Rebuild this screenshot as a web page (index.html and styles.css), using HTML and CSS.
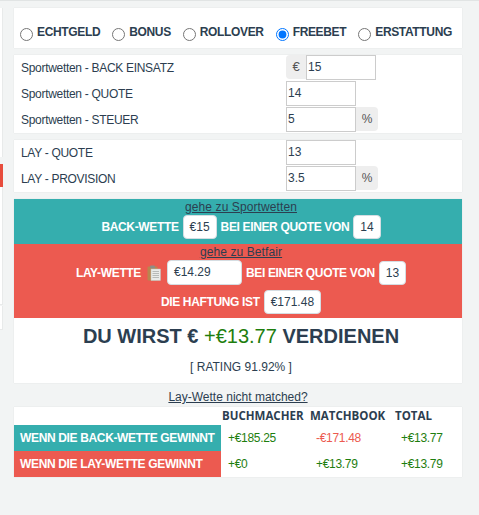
FILE: index.html
```html
<!DOCTYPE html>
<html lang="de">
<head>
  <meta charset="UTF-8" />
  <meta name="viewport" content="width=device-width, initial-scale=1.0" />
  <title>Rechner</title>
  <link rel="stylesheet" href="styles.css">
</head>
<body>

  <!-- sidebar edge -->
  <div class="side-edge"></div>
  <div class="side-mark"></div>
  <div class="side-low"></div>
  <div class="side-foot"></div>

  <main class="page">
    <section class="card modes">
      <label class="mode"><input type="radio" name="mode" /><span>ECHTGELD</span></label>
      <label class="mode"><input type="radio" name="mode" /><span>BONUS</span></label>
      <label class="mode"><input type="radio" name="mode" /><span>ROLLOVER</span></label>
      <label class="mode"><input type="radio" name="mode" checked /><span>FREEBET</span></label>
      <label class="mode"><input type="radio" name="mode" /><span>ERSTATTUNG</span></label>
    </section>

    <section class="card fields">
      <div class="row">
        <span class="row-label">Sportwetten - BACK EINSATZ</span>
        <span class="addon addon-left">€</span><input class="num" value="15" />
      </div>
      <div class="row">
        <span class="row-label">Sportwetten - QUOTE</span>
        <input class="num" value="14" />
      </div>
      <div class="row">
        <span class="row-label">Sportwetten - STEUER</span>
        <input class="num" value="5" /><span class="addon addon-right">%</span>
      </div>
    </section>

    <section class="card fields">
      <div class="row">
        <span class="row-label">LAY - QUOTE</span>
        <input class="num" value="13" />
      </div>
      <div class="row">
        <span class="row-label">LAY - PROVISION</span>
        <input class="num" value="3.5" /><span class="addon addon-right">%</span>
      </div>
    </section>

    <section class="card result">
      <div class="band band-back">
        <a class="go" href="#">gehe zu Sportwetten</a>
        <div class="band-line">
          <b>BACK-WETTE</b><span class="chip">€15</span><b>BEI EINER QUOTE VON</b><span class="chip">14</span>
        </div>
      </div>
      <div class="band band-lay">
        <a class="go" href="#">gehe zu Betfair</a>
        <div class="band-line">
          <b>LAY-WETTE</b>
          <svg class="clip" width="14" height="16" viewBox="0 0 14 16">
            <rect x="0.5" y="1.5" width="10" height="14" rx="1" fill="#b8864f" />
            <rect x="3" y="0.5" width="5" height="3" rx="1" fill="#8d8d86" />
            <rect x="4" y="4" width="9.5" height="11.5" fill="#e9ebe9" stroke="#bfc3c0" stroke-width="0.5" />
            <path d="M5.5 6.5h6.5M5.5 8.5h6.5M5.5 10.5h6.5M5.5 12.5h6.5" stroke="#a9adab" stroke-width="0.8" />
          </svg>
          <span class="chip chip-wide">€14.29</span><b>BEI EINER QUOTE VON</b><span class="chip">13</span>
        </div>
        <div class="band-line band-line-last">
          <b>DIE HAFTUNG IST</b><span class="chip">€171.48</span>
        </div>
      </div>
      <h2 class="profit">DU WIRST € <span class="plus">+€13.77</span> VERDIENEN</h2>
      <p class="rating">[ RATING 91.92% ]</p>
    </section>

    <p class="unmatched"><a href="#">Lay-Wette nicht matched?</a></p>

    <section class="card">
      <table class="summary">
        <thead>
          <tr>
            <th class="col-name"></th>
            <th class="col-book">BUCHMACHER</th>
            <th class="col-match">MATCHBOOK</th>
            <th class="col-total">TOTAL</th>
          </tr>
        </thead>
        <tbody>
          <tr>
            <td class="name name-back">WENN DIE BACK-WETTE GEWINNT</td>
            <td class="plus">+€185.25</td>
            <td class="minus">-€171.48</td>
            <td class="plus">+€13.77</td>
          </tr>
          <tr>
            <td class="name name-lay">WENN DIE LAY-WETTE GEWINNT</td>
            <td class="plus">+€0</td>
            <td class="plus">+€13.79</td>
            <td class="plus">+€13.79</td>
          </tr>
        </tbody>
      </table>
    </section>
  </main>
</body>
</html>
```

FILE: styles.css
```css
* {
  box-sizing: border-box;
  margin: 0;
  padding: 0;
}

html, body {
  height: 515px;
  overflow: hidden;
}

body {
  font-family: 'Liberation Sans', Arial, sans-serif;
  font-size: 12px;
  letter-spacing: -0.3px;
  color: #2c3e50;
  background: #f2f4f4;
  border-top: 1px solid #e1e4e4;
  position: relative;
}

b,
.mode,
.summary td.name {
  letter-spacing: -0.35px;
}

.side-edge,
.side-mark,
.side-low,
.side-foot {
  position: absolute;
  left: 0;
  width: 3px;
  background: #fff;
  border-right: 1px solid #e8eaea;
}

.side-edge {
  top: 7px;
  height: 149px;
}

.side-mark {
  top: 163px;
  height: 23px;
  background: #e74c3c;
  border-right: 0;
}

.side-low {
  top: 186px;
  height: 118px;
  border-bottom: 1px solid #e8eaea;
}

.side-foot {
  top: 305px;
  height: 24px;
  border-bottom: 1px solid #e8eaea;
}

.page {
  width: 448px;
  margin-left: 14px;
  padding-top: 7px;
}

.card {
  background: #fff;
  margin-bottom: 7px;
  box-shadow: 0 0 1px rgba(0,0,0,0.12);
}

.modes {
  height: 40px;
  padding: 17px 0 0 6px;
  display: flex;
}

.mode {
  display: flex;
  align-items: flex-start;
  font-weight: 700;
  margin-right: 12px;
}

.mode input {
  width: 13px;
  height: 13px;
  margin: 3px 4px 0 0;
}

.row {
  height: 26px;
  display: flex;
  align-items: flex-start;
  position: relative;
  padding-left: 272px;
}

.row-label {
  position: absolute;
  left: 7px;
  top: 6px;
}

.num {
  width: 70px;
  height: 25px;
  border: 1px solid #ccc;
  padding: 0 1px 2px;
  font: 12px 'Liberation Sans', Arial, sans-serif;
  color: #2c3e50;
}

.addon {
  height: 24px;
  background: #eee;
  color: #555;
  font-size: 12px;
  letter-spacing: 0;
  line-height: 24px;
  text-align: center;
}

.addon-left {
  width: 20px;
  font-size: 13px;
  border-radius: 4px 0 0 4px;
}

.addon-right {
  width: 22px;
  border-radius: 0 4px 4px 0;
}

.result {
  height: 184px;
  text-align: center;
}

.band {
  color: #fff;
  padding-left: 6px;
}

.band-back {
  background: #35aeae;
  height: 45px;
}

.band-lay {
  background: #ec5a50;
  height: 74px;
}

.go {
  display: block;
  color: #2c3e50;
  letter-spacing: 0.1px;
  text-decoration: underline;
  line-height: 15px;
  padding-top: 1px;
}

.band-line {
  display: flex;
  justify-content: center;
  align-items: center;
  gap: 4px;
  height: 24px;
}

.band-lay .band-line {
  height: 25px;
}

.band-lay .band-line-last {
  height: 33px;
}

.chip {
  background: #fff;
  color: #2c3e50;
  border: 1px solid #d5dde2;
  border-radius: 4px;
  letter-spacing: 0;
  height: 24px;
  line-height: 22px;
  padding: 0 6px;
}

.chip-wide {
  width: 75px;
  height: 25px;
  text-align: left;
}

.clip {
  margin: 0 2px 0 2px;
}

.profit {
  font-size: 20px;
  letter-spacing: 0;
  line-height: 24px;
  margin-top: 6px;
  padding-left: 6px;
}

.plus {
  color: #1e7e0e;
}

.minus {
  color: #ec5a50;
}

.profit .plus {
  font-weight: 400;
}

.rating {
  letter-spacing: 0;
  margin-top: 12px;
  padding-left: 6px;
}

.unmatched {
  letter-spacing: 0;
  text-align: center;
  line-height: 14px;
  height: 17px;
}

.unmatched a {
  color: #2c3e50;
}

.summary {
  width: 100%;
  border-collapse: collapse;
  table-layout: fixed;
}

.summary th {
  font-family: 'Open Sans', sans-serif;
  font-size: 11.5px;
  letter-spacing: 0;
  height: 18px;
  padding: 0 0 2px 1px;
  text-align: left;
}

.col-name {
  width: 207px;
}

.col-book {
  width: 88px;
}

.col-match {
  width: 85px;
}

.summary td {
  height: 26px;
  padding-left: 7px;
  font-weight: 400;
}

.summary td.name {
  color: #fff;
  font-weight: 700;
  padding-left: 6px;
  white-space: nowrap;
}

.name-back {
  background: #35aeae;
}

.name-lay {
  background: #ec5a50;
}
```
